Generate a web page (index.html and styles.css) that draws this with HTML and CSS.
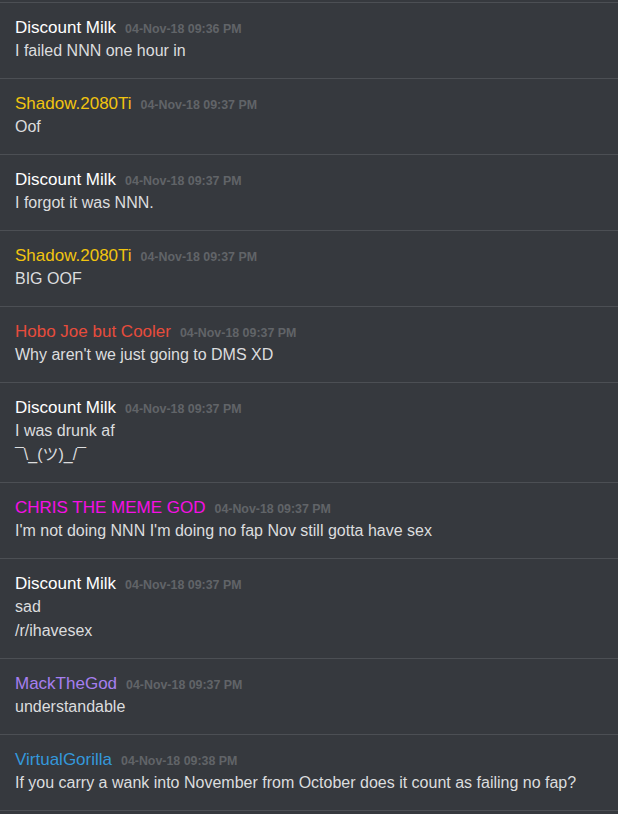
FILE: index.html
```html
<!DOCTYPE html>
<html lang="en">
<head>
<meta charset="utf-8">
<title>Chat log</title>
<link rel="stylesheet" href="styles.css">
</head>
<body>
<div class="log">
  <div class="msg">
    <div class="head"><span class="user">Discount Milk</span><span class="time">04-Nov-18 09:36 PM</span></div>
    <div class="text">I failed NNN one hour in</div>
  </div>
  <div class="msg">
    <div class="head"><span class="user c-yellow">Shadow.2080Ti</span><span class="time">04-Nov-18 09:37 PM</span></div>
    <div class="text">Oof</div>
  </div>
  <div class="msg">
    <div class="head"><span class="user">Discount Milk</span><span class="time">04-Nov-18 09:37 PM</span></div>
    <div class="text">I forgot it was NNN.</div>
  </div>
  <div class="msg">
    <div class="head"><span class="user c-yellow">Shadow.2080Ti</span><span class="time">04-Nov-18 09:37 PM</span></div>
    <div class="text">BIG OOF</div>
  </div>
  <div class="msg">
    <div class="head"><span class="user c-red">Hobo Joe but Cooler</span><span class="time">04-Nov-18 09:37 PM</span></div>
    <div class="text">Why aren't we just going to DMS XD</div>
  </div>
  <div class="msg">
    <div class="head"><span class="user">Discount Milk</span><span class="time">04-Nov-18 09:37 PM</span></div>
    <div class="text">I was drunk af</div>
    <div class="text">¯\_(ツ)_/¯</div>
  </div>
  <div class="msg">
    <div class="head"><span class="user c-magenta">CHRIS THE MEME GOD</span><span class="time">04-Nov-18 09:37 PM</span></div>
    <div class="text">I'm not doing NNN I'm doing no fap Nov still gotta have sex</div>
  </div>
  <div class="msg">
    <div class="head"><span class="user">Discount Milk</span><span class="time">04-Nov-18 09:37 PM</span></div>
    <div class="text">sad</div>
    <div class="text">/r/ihavesex</div>
  </div>
  <div class="msg">
    <div class="head"><span class="user c-purple">MackTheGod</span><span class="time">04-Nov-18 09:37 PM</span></div>
    <div class="text">understandable</div>
  </div>
  <div class="msg">
    <div class="head"><span class="user c-blue">VirtualGorilla</span><span class="time">04-Nov-18 09:38 PM</span></div>
    <div class="text">If you carry a wank into November from October does it count as failing no fap?</div>
  </div>
</div>
</body>
</html>
```
FILE: styles.css
```css
html, body {
  margin: 0;
  padding: 0;
  background: #36393e;
}
body {
  font-family: "Liberation Sans", Arial, "Noto Sans CJK JP", sans-serif;
  color: #dcddde;
}
.log {
  padding-top: 2px;
  border-bottom: 1px solid #4c4f54;
}
.msg {
  border-top: 1px solid #4c4f54;
  padding: 13px 15px 15px;
}
.head {
  display: flex;
  align-items: baseline;
  gap: 9px;
  height: 23px;
  line-height: 23px;
  white-space: nowrap;
}
.user {
  font-size: 17px;
  color: #ffffff;
}
.time {
  font-size: 12.4px;
  line-height: 14px;
  font-weight: bold;
  color: #616468;
}
.text {
  font-size: 16px;
  height: 24px;
  line-height: 24px;
  color: #dcddde;
  white-space: nowrap;
}
.c-yellow { color: #f1c40f; }
.c-red { color: #e74c3c; }
.c-magenta { color: #f50fe4; }
.c-purple { color: #a67ff0; }
.c-blue { color: #3498db; }
```
